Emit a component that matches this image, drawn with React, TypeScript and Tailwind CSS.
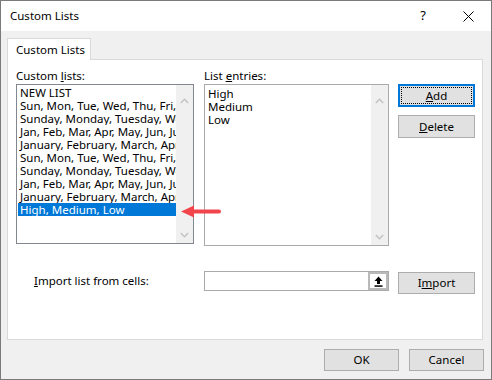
import React from "react";

const font = { fontFamily: '"Noto Sans", "Segoe UI", sans-serif' };

const customLists = [
  "NEW LIST",
  "Sun, Mon, Tue, Wed, Thu, Fri, Sat",
  "Sunday, Monday, Tuesday, Wednesday, Thursday, Friday, Saturday",
  "Jan, Feb, Mar, Apr, May, Jun, Jul, Aug, Sep, Oct, Nov, Dec",
  "January, February, March, April, May, June, July, August",
  "Sun, Mon, Tue, Wed, Thu, Fri, Sat",
  "Sunday, Monday, Tuesday, Wednesday, Thursday, Friday, Saturday",
  "Jan, Feb, Mar, Apr, May, Jun, Jul, Aug, Sep, Oct, Nov, Dec",
  "January, February, March, April, May, June, July, August",
  "High, Medium, Low",
];

const entries = ["High", "Medium", "Low"];

function Chevron({ up }: { up?: boolean }) {
  return (
    <svg width="9" height="6" viewBox="0 0 9 6" fill="none">
      <path
        d={up ? "M0.8 5 L4.5 1.3 L8.2 5" : "M0.8 1 L4.5 4.7 L8.2 1"}
        stroke="#c4c4c4"
        strokeWidth="1.6"
      />
    </svg>
  );
}

// scrollbar désactivé, comme dans Excel
function Scrollbar() {
  return (
    <div className="w-[17px] h-full bg-[#f0f0f0] flex flex-col justify-between shrink-0">
      <div className="h-[19px] flex items-end justify-center">
        <Chevron up />
      </div>
      <div className="h-[17px] flex items-center justify-center">
        <Chevron />
      </div>
    </div>
  );
}

function Btn({ children, focused }: { children: React.ReactNode; focused?: boolean }) {
  if (focused) {
    return (
      <div className="w-[77px] h-[23px] border-2 border-[#0078d7] bg-[#e1e1e1] p-px">
        <div className="w-full h-full border border-dotted border-black flex items-center justify-center text-[11.5px]">
          {children}
        </div>
      </div>
    );
  }
  return (
    <div className="w-[77px] h-[23px] border border-[#adadad] bg-[#e1e1e1] flex items-center justify-center text-[11.5px]">
      {children}
    </div>
  );
}

export default function App() {
  return (
    <div
      className="relative w-[492px] h-[380px] flex flex-col border border-[#7a7a7a] bg-[#f0f0f0] text-black overflow-hidden"
      style={font}
    >
      {/* barre de titre */}
      <div className="h-[30px] bg-white flex items-center pl-[9px] pr-[17px] text-[11.5px] shrink-0">
        <span className="flex-1">Custom Lists</span>
        <span className="text-[13px] mr-[37px]">?</span>
        <svg width="11" height="11" viewBox="0 0 11 11">
          <path d="M0.5 0.5 L10.5 10.5 M10.5 0.5 L0.5 10.5" stroke="#000" strokeWidth="1" />
        </svg>
      </div>

      <div className="flex-1 flex flex-col px-[6px] pt-[7px]">
        {/* onglet */}
        <div className="flex">
          <div className="w-[84px] h-[22px] bg-white border border-b-0 border-[#d9d9d9] flex items-center pl-[8px] text-[11.5px] -mb-px relative z-10">
            Custom Lists
          </div>
        </div>

        {/* panneau */}
        <div className="w-[476px] h-[281px] bg-white border border-[#d9d9d9] pl-[8px] pt-[8px] flex flex-col">
          <div className="flex">
            <div className="w-[178px] flex flex-col">
              <div className="h-[16px] leading-[16px] text-[11.5px]">
                Custom <span className="underline">l</span>ists:
              </div>
              <div className="h-[160px] border border-[#828790] flex">
                <div className="flex-1 min-w-0 p-px pr-0 overflow-hidden">
                  {customLists.map((l, i) => (
                    <div
                      key={i}
                      className={`h-[13px] leading-[13px] pl-[2px] text-[11.5px] whitespace-nowrap overflow-hidden ${
                        i === 9 ? "bg-[#0078d7] text-white" : ""
                      }`}
                    >
                      {l}
                    </div>
                  ))}
                </div>
                <Scrollbar />
              </div>
            </div>

            <div className="w-[185px] ml-[10px] flex flex-col">
              <div className="h-[16px] leading-[16px] text-[11.5px]">
                List <span className="underline">e</span>ntries:
              </div>
              <div className="h-[162px] border border-[#aaaaaa] flex">
                <div className="flex-1 pl-[3px] pt-[2px]">
                  {entries.map((e) => (
                    <div key={e} className="h-[13px] leading-[13px] text-[11.5px]">
                      {e}
                    </div>
                  ))}
                </div>
                <Scrollbar />
              </div>
            </div>

            <div className="ml-[9px] pt-[16px] flex flex-col gap-[8px]">
              <Btn focused>
                <span className="underline">A</span>dd
              </Btn>
              <Btn>
                <span className="underline">D</span>elete
              </Btn>
            </div>
          </div>

          {/* import */}
          <div className="flex items-start mt-[25px]">
            <div className="w-[188px] pl-[18px] h-[20px] flex items-center text-[11.5px]">
              <span>
                <span className="underline">I</span>mport list from cells:
              </span>
            </div>
            <div className="w-[185px] h-[20px] border border-[#aaaaaa] bg-white flex justify-end">
              <div className="w-[20px] h-full border-2 border-[#b9b9b9] bg-white flex items-center justify-center">
                <svg width="9" height="11" viewBox="0 0 9 11">
                  <path d="M4.5 0.5 L8.5 5 L6 5 L6 8 L3 8 L3 5 L0.5 5 Z" fill="#000" />
                  <rect x="0.5" y="9.3" width="8" height="1.5" fill="#000" />
                </svg>
              </div>
            </div>
            <div className="ml-[9px] mt-px w-[77px] h-[22px] border border-[#adadad] bg-[#e1e1e1] flex items-center justify-center text-[11.5px]">
              <span>
                I<span className="underline">m</span>port
              </span>
            </div>
          </div>
        </div>

        {/* boutons OK / Annuler */}
        <div className="flex justify-end gap-[10px] mt-[9px] pr-px">
          <div className="w-[75px] h-[22px] border border-[#adadad] bg-[#e1e1e1] flex items-center justify-center text-[11.5px]">
            OK
          </div>
          <div className="w-[75px] h-[22px] border border-[#adadad] bg-[#e1e1e1] flex items-center justify-center text-[11.5px]">
            Cancel
          </div>
        </div>
      </div>

      {/* flèche rouge d'annotation */}
      <svg
        className="absolute left-[179px] top-[203px]"
        width="42"
        height="15"
        viewBox="0 0 42 15"
      >
        <path d="M1 7.5 L14 1.5 L14 13.5 Z" fill="#f2454b" />
        <path d="M13 7.5 L39 7.5" stroke="#f2454b" strokeWidth="4" strokeLinecap="round" />
      </svg>
    </div>
  );
}
